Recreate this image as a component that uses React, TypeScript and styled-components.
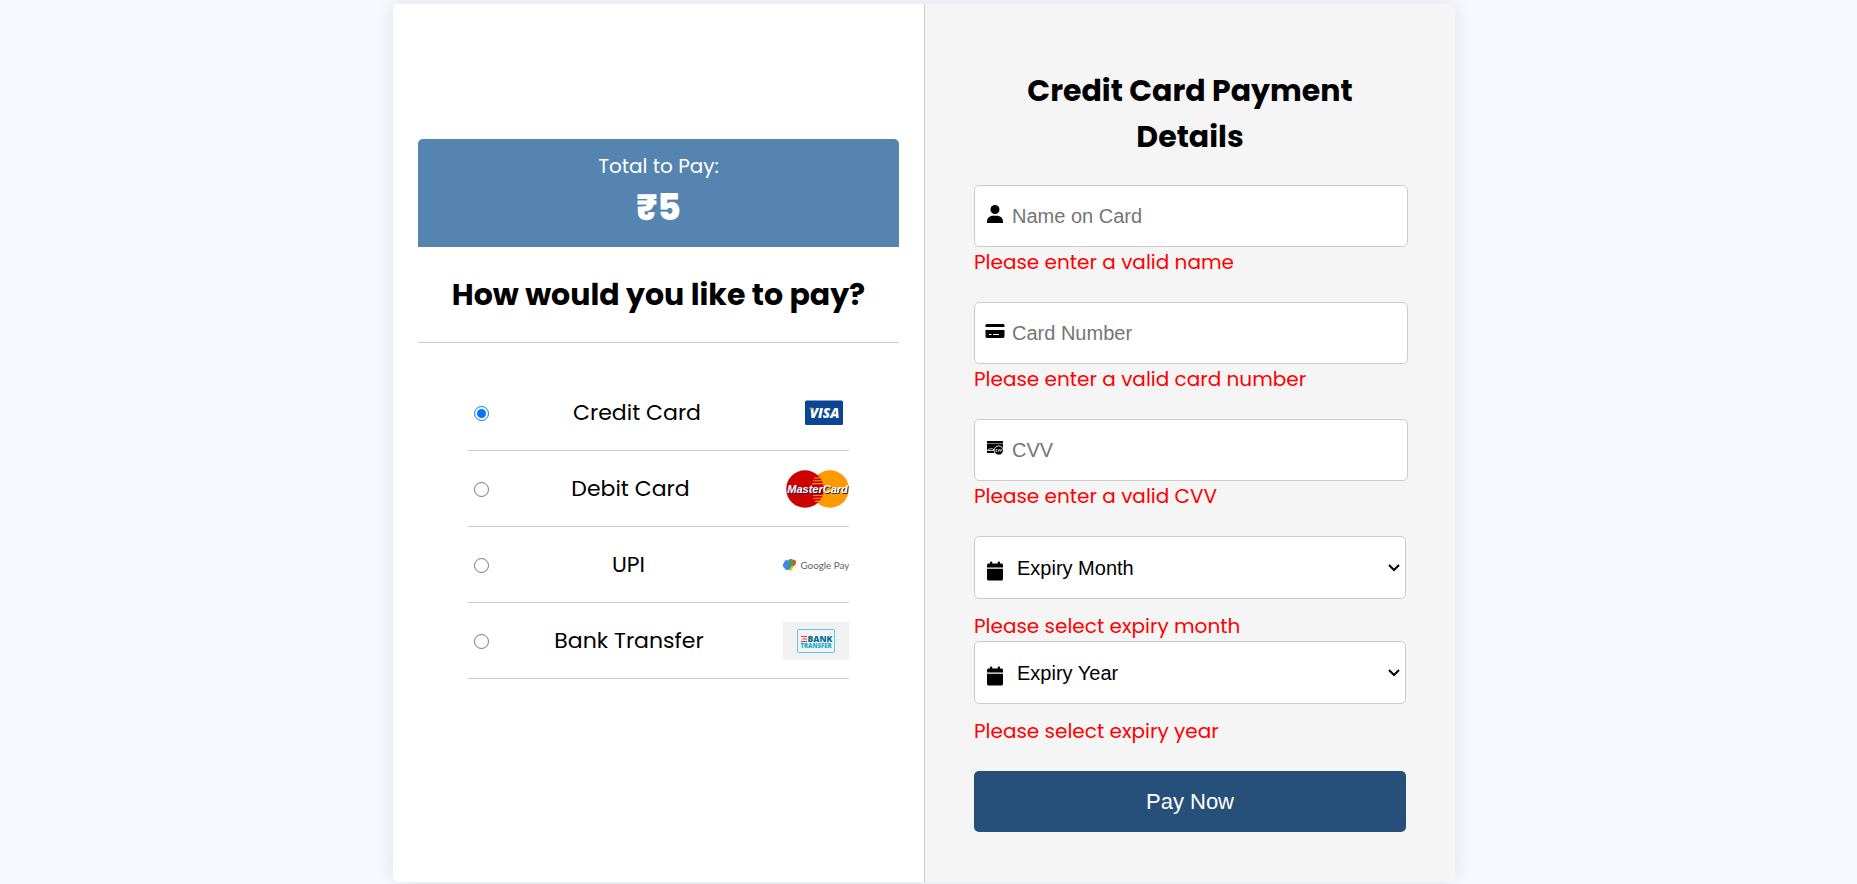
import React, { useState } from "react";
import styled, { createGlobalStyle } from "styled-components";

const GlobalStyle = createGlobalStyle`
  *, *::before, *::after { box-sizing: border-box; }
  body {
    margin: 0;
    background: #f8f9ff;
    color: #000;
    font-family: Poppins, Inter, sans-serif;
  }
`;

const Page = styled.main`
  display: flex;
  justify-content: center;
  align-items: flex-start;
  min-height: 100vh;
  padding: 4px 9px 2px 0;
`;

const Card = styled.div`
  display: grid;
  grid-template-columns: 1fr 1fr;
  width: 100%;
  max-width: 1062px;
  border-radius: 5px;
  overflow: hidden;
  background: #fff;
  box-shadow: 0 0 20px rgba(0, 0, 0, 0.1);
`;

const MethodPanel = styled.section`
  padding: 135px 25px 50px;
`;

const DetailsPanel = styled.section`
  padding: 64px 49px 50px;
  border-left: 1px solid #ccc;
  background: #f5f5f5;
`;

const Total = styled.div`
  padding: 11px 16px 13px;
  border-radius: 5px 5px 0 0;
  background: #5584b0;
  color: #fff;
  text-align: center;
`;

const TotalLabel = styled.div`
  font-size: 20px;
  line-height: 32px;
`;

const TotalAmount = styled.div`
  font-size: 36px;
  font-weight: 800;
  line-height: 52px;
`;

const Title = styled.h2`
  margin: 0;
  font-size: 30px;
  font-weight: 700;
  line-height: 46px;
  text-align: center;
`;

const MethodTitle = styled(Title)`
  padding: 25px 0 24px;
  border-bottom: 1px solid #ccc;
`;

const DetailsTitle = styled(Title)`
  padding: 0 32px;
  margin-bottom: 25px;
`;

const Methods = styled.ul`
  margin: 32px 50px 0;
  padding: 0;
  list-style: none;
`;

const Method = styled.li`
  display: flex;
  align-items: center;
  height: 76px;
  border-bottom: 1px solid #ccc;
`;

const Radio = styled.input`
  flex: none;
  width: 15px;
  height: 15px;
  margin: 2px 0 0 6px;
`;

const MethodLabel = styled.label`
  flex: 1;
  padding-right: 14px;
  font-size: 22px;
  line-height: 36px;
  text-align: center;
`;

const Logo = styled.svg`
  flex: none;
  display: block;
  height: 38px;
`;

const Field = styled.div<{ $tall?: boolean }>`
  position: relative;
  display: flex;
  align-items: center;
  height: ${(p) => (p.$tall ? 63 : 62)}px;
  margin-right: ${(p) => (p.$tall ? 0 : -2)}px;
  padding-left: 10px;
  border: 1px solid #ccc;
  border-radius: 5px;
  background: #fff;
`;

const FieldIcon = styled.label<{ $low?: boolean }>`
  flex: none;
  width: 20px;
  height: 20px;
  margin-top: ${(p) => (p.$low ? 6 : 0)}px;
  margin-bottom: ${(p) => (p.$low ? 0 : 4)}px;
  svg { display: block; }
`;

const TextInput = styled.input`
  flex: 1;
  min-width: 0;
  height: 100%;
  padding: 0 7px;
  border: 0;
  outline: 0;
  background: transparent;
  font: 20px "Liberation Sans", sans-serif;
  &::placeholder { color: #757575; }
`;

const Select = styled.select`
  flex: 1;
  min-width: 0;
  height: 100%;
  padding: 0 32px 0 12px;
  border: 0;
  border-radius: 5px;
  appearance: none;
  background: transparent;
  color: #000;
  font: 20px "Liberation Sans", sans-serif;
`;

const Chevron = styled.svg`
  position: absolute;
  top: 26px;
  right: 5px;
  pointer-events: none;
`;

const ErrorText = styled.p<{ $spaceAbove?: boolean; $spaceBelow?: boolean }>`
  margin: ${(p) => (p.$spaceAbove ? 12 : 0)}px 0 ${(p) => (p.$spaceBelow ? 25 : 0)}px;
  color: #f00;
  font-size: 20px;
  line-height: 30px;
`;

const PayButton = styled.button`
  display: block;
  width: 100%;
  height: 61px;
  border: 0;
  border-radius: 5px;
  background: #264f7a;
  color: #fff;
  font: 22px "Liberation Sans", sans-serif;
  cursor: pointer;
`;

const UserIcon = () => (
  <svg width="20" height="20" viewBox="0 0 20 20" aria-hidden="true">
    <circle cx="10" cy="5.500" r="4.500" />
    <path d="M2 19v-1c0-4 2.600-6.200 6.200-6.200h3.600c3.600 0 6.200 2.200 6.200 6.200v1z" />
  </svg>
);

const CardIcon = () => (
  <svg width="20" height="20" viewBox="0 0 20 20" aria-hidden="true">
    <path d="M.5 6V4.600C.5 3.600 1.200 3 2.200 3h15.600c1 0 1.700.6 1.700 1.600V6z" />
    <path d="M.5 9h19v6.300c0 1-.7 1.700-1.700 1.700H2.200C1.200 17 .5 16.300.5 15.300z" />
    <path d="M4 13.500h2.500M8 13.500h6" stroke="#fff" />
  </svg>
);

const CvvIcon = () => (
  <svg width="20" height="20" viewBox="0 0 20 20" aria-hidden="true">
    <path d="M2 3h16v12H2z" />
    <path d="M2 5.500h16" stroke="#999" strokeWidth=".8" />
    <path d="M2.500 12.500v-.5c2-1.600 4.500-1.600 6.500-.5v1z" fill="none" stroke="#fff" strokeWidth=".8" />
    <circle cx="13.700" cy="12.500" r="4.600" stroke="#fff" strokeWidth=".9" />
    <path d="M12.200 11.400h-1.200v2.200h1.200M12.900 11.200l.8 2.300.8-2.300M15 11.200l.7 2.300.8-2.300" fill="none" stroke="#fff" strokeWidth=".7" />
  </svg>
);

const CalendarIcon = () => (
  <svg width="20" height="20" viewBox="0 0 20 20" aria-hidden="true">
    <path d="M5 2.500V1.600c0-1.500 2.300-1.500 2.300 0v.9h5.400v-.9c0-1.500 2.300-1.500 2.300 0v.9h1.300c1 0 1.700.7 1.700 1.700V6.500H2V4.200c0-1 .7-1.700 1.700-1.700z" />
    <path d="M2 7.700h16v10c0 1-.7 1.800-1.700 1.800H3.700c-1 0-1.700-.8-1.700-1.800z" />
  </svg>
);

const VisaLogo = () => (
  <Logo width="50" viewBox="0 0 50 38" aria-hidden="true">
    <rect x="6" y="6.500" width="38" height="24.500" rx="1.500" fill="#0b4595" />
    <text x="25.500" y="23.500" textAnchor="middle" fill="#fff" fontFamily="Open Sans, sans-serif" fontStyle="italic" fontWeight="800" fontSize="13.500">VISA</text>
    <path d="M10 13.800h3.300c.9 0 1.300.5 1.400 1.300l.5 2.600c-1-1.700-2.500-3-5.200-3.500z" fill="#f5a81c" />
  </Logo>
);

const MastercardLogo = () => (
  <Logo width="63" viewBox="0 0 63 38" aria-hidden="true">
    <circle cx="44" cy="19" r="18.800" fill="#f90" />
    <circle cx="19" cy="19" r="18.800" fill="#c00" />
    <path d="M28 8h7M27 10.800h9M26 13.600h11M27 25.500h10M27 28.300h9M29 31.100h6" stroke="#f90" strokeWidth="1.100" />
    <g fontFamily="Liberation Sans, sans-serif" fontStyle="italic" fontWeight="700" fontSize="11" textAnchor="middle">
      <text x="32.300" y="24" fill="#1b1b5a">MasterCard</text>
      <text x="31.500" y="23" fill="#fff">MasterCard</text>
    </g>
  </Logo>
);

const GooglePayLogo = () => (
  <Logo width="67" viewBox="0 0 67 38" aria-hidden="true">
    <path d="M8.500 15.500l3 1.300" stroke="#ea4335" strokeWidth="5" strokeLinecap="round" />
    <path d="M11.300 17L8 22.300" stroke="#fbbc04" strokeWidth="4.800" strokeLinecap="round" />
    <path d="M11.600 16l-.4 1.500" stroke="#ea4335" strokeWidth="4.500" strokeLinecap="round" />
    <path d="M9.200 15.700l-2.600 4.800" stroke="#34a853" strokeWidth="4.800" strokeLinecap="round" />
    <path d="M4.800 16.500L3.200 19.500l2 2" fill="none" stroke="#4285f4" strokeWidth="4.800" strokeLinecap="round" strokeLinejoin="round" />
    <text x="18.500" y="22.500" fill="#5f6368" fontFamily="Lato, sans-serif" fontSize="9.800">Google Pay</text>
  </Logo>
);

const BankLogo = () => (
  <Logo width="66" viewBox="0 0 66 38" aria-hidden="true">
    <rect width="66" height="38" fill="#f1f1f1" />
    <rect x="14.500" y="7.500" width="37" height="23" rx="1.500" fill="#f3f3f3" stroke="#5cc9e0" />
    <path d="M18 14.500h6M19.500 17h4.500M18 19.500h6" stroke="#d9413c" strokeWidth="1" />
    <g fontFamily="Open Sans, sans-serif" fontWeight="800">
      <text x="24.500" y="20" fill="#0c6f93" fontSize="8.500">BANK</text>
      <text x="17.500" y="25.500" fill="#19a9ca" fontSize="6">TRANSFER</text>
    </g>
  </Logo>
);

const methods = [
  { id: "credit", label: "Credit Card", logo: <VisaLogo /> },
  { id: "debit", label: "Debit Card", logo: <MastercardLogo /> },
  { id: "upi", label: "UPI", logo: <GooglePayLogo /> },
  { id: "bank", label: "Bank Transfer", logo: <BankLogo /> },
];

const textFields = [
  { id: "name", label: "Name on Card", icon: <UserIcon />, error: "Please enter a valid name" },
  { id: "number", label: "Card Number", icon: <CardIcon />, error: "Please enter a valid card number" },
  { id: "cvv", label: "CVV", icon: <CvvIcon />, error: "Please enter a valid CVV" },
];

const selectFields = [
  {
    id: "month",
    label: "Expiry Month",
    error: "Please select expiry month",
    options: ["01", "02", "03", "04", "05", "06", "07", "08", "09", "10", "11", "12"],
  },
  {
    id: "year",
    label: "Expiry Year",
    error: "Please select expiry year",
    options: ["2024", "2025", "2026", "2027", "2028", "2029", "2030"],
  },
];

export default function App() {
  const [method, setMethod] = useState("credit");

  return (
    <>
      <GlobalStyle />
      <Page>
        <Card>
          <MethodPanel>
            <Total>
              <TotalLabel>Total to Pay:</TotalLabel>
              <TotalAmount>₹5</TotalAmount>
            </Total>
            <MethodTitle>How would you like to pay?</MethodTitle>
            <Methods>
              {methods.map((m) => (
                <Method key={m.id}>
                  <Radio
                    type="radio"
                    name="method"
                    id={m.id}
                    checked={method === m.id}
                    onChange={() => setMethod(m.id)}
                  />
                  <MethodLabel htmlFor={m.id}>{m.label}</MethodLabel>
                  {m.logo}
                </Method>
              ))}
            </Methods>
          </MethodPanel>
          <DetailsPanel>
            <DetailsTitle>Credit Card Payment Details</DetailsTitle>
            <form onSubmit={(e) => e.preventDefault()}>
              {textFields.map((f) => (
                <React.Fragment key={f.id}>
                  <Field>
                    <FieldIcon htmlFor={f.id} aria-label={f.label}>{f.icon}</FieldIcon>
                    <TextInput id={f.id} type="text" placeholder={f.label} aria-label={f.label} />
                  </Field>
                  <ErrorText $spaceBelow>{f.error}</ErrorText>
                </React.Fragment>
              ))}
              {selectFields.map((f, i) => (
                <React.Fragment key={f.id}>
                  <Field $tall>
                    <FieldIcon $low htmlFor={f.id} aria-label={f.label}><CalendarIcon /></FieldIcon>
                    <Select id={f.id} aria-label={f.label} defaultValue="">
                      <option value="">{f.label}</option>
                      {f.options.map((o) => (
                        <option key={o} value={o}>{o}</option>
                      ))}
                    </Select>
                    <Chevron width="12" height="10" viewBox="0 0 12 10" aria-hidden="true">
                      <path d="M1 2l5 5 5-5" fill="none" stroke="#000" strokeWidth="2" />
                    </Chevron>
                  </Field>
                  <ErrorText $spaceAbove $spaceBelow={i === selectFields.length - 1}>{f.error}</ErrorText>
                </React.Fragment>
              ))}
              <PayButton type="submit">Pay Now</PayButton>
            </form>
          </DetailsPanel>
        </Card>
      </Page>
    </>
  );
}
